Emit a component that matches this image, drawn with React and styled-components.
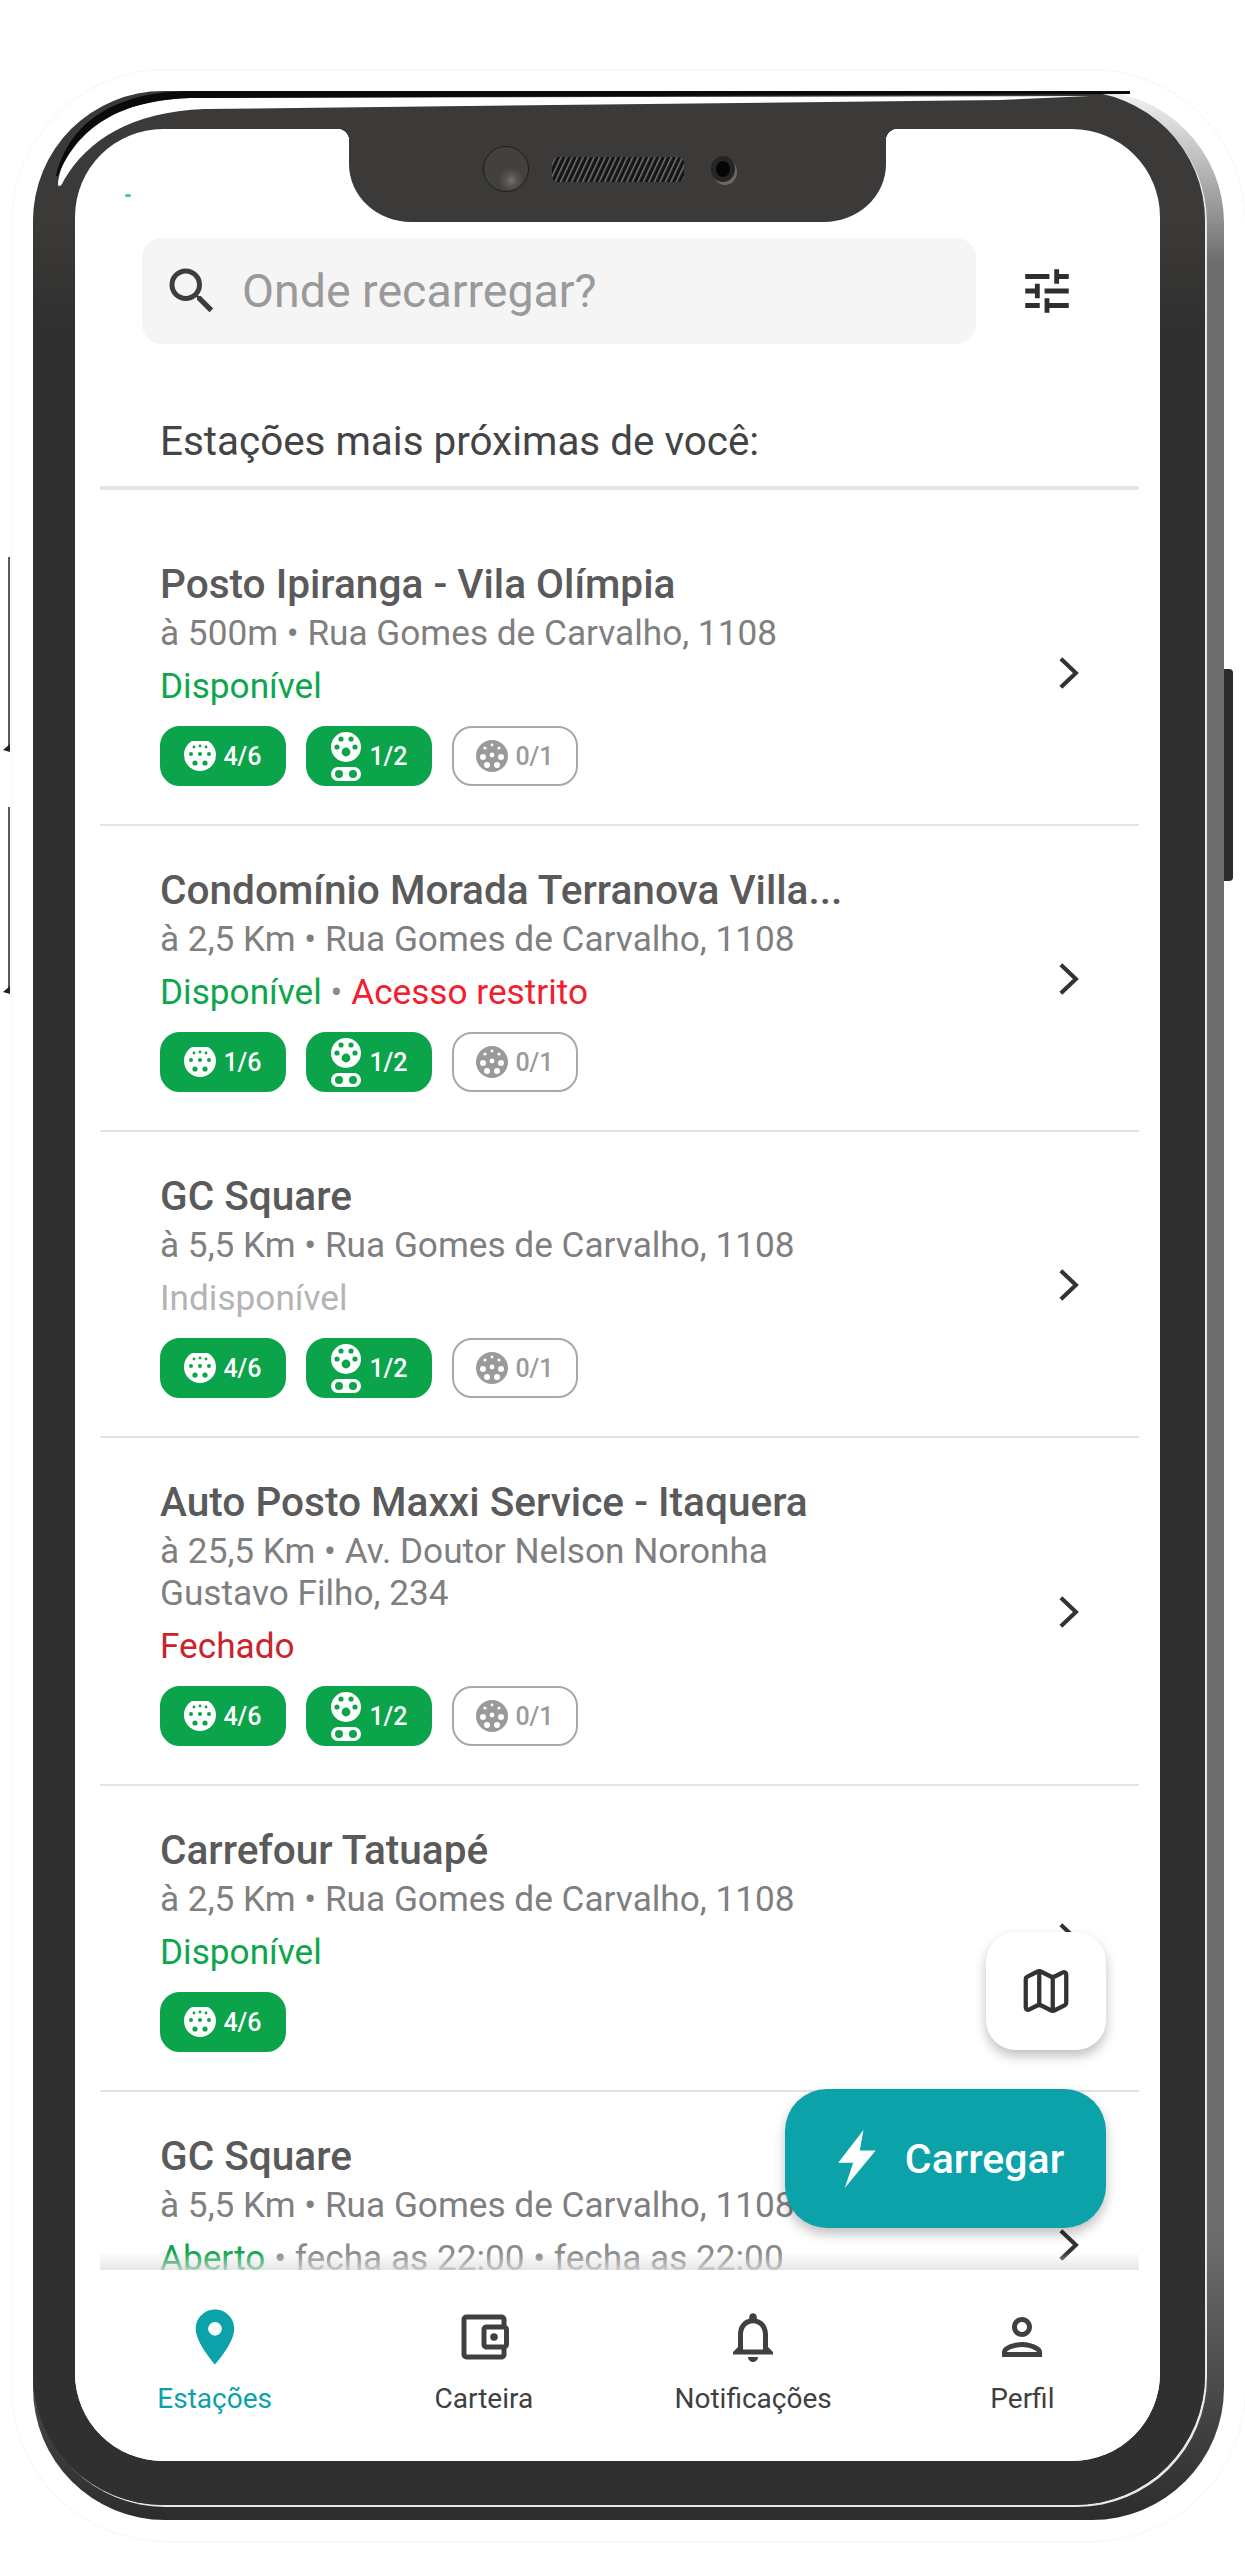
import React from "react"
import styled, { createGlobalStyle } from "styled-components";
import { MdSearch, MdTune, MdOutlineAccountBalanceWallet, MdOutlineNotifications, MdOutlinePerson, MdLocationOn } from "react-icons/md";
import { Map as MapIcon } from "lucide-react";

const GlobalStyle = createGlobalStyle`
  html, body {
    margin: 0;
    padding: 0;
    background: #fff;
    font-family: Roboto, "Liberation Sans", sans-serif;
  }
  * { box-sizing: border-box; }
`;

const Page = styled.div`
  width: 1245px;
  height: 2560px;
  padding: 91px 0 0 33px;
  overflow: hidden;
  background: #fff;
`;

const Phone = styled.div`
  position: relative;
  width: 1191px;
  height: 2429px;
  padding: 0 19px 15px 0;
  border-radius: 132px;
  background: linear-gradient(180deg, #f4f4f4 0, #6e6e6e 170px, #6e6e6e 88%, #2c2c2c 100%);
  box-shadow: 0 0 0 21px #fff, 0 0 0 22px #f6f6f6;
`;

const Bezel = styled.div`
  height: 100%;
  padding: 38px 45px 44px 42px;
  border-radius: 130px;
  background: linear-gradient(180deg, #3c3a38 0, #3c3a38 130px, #303030 240px);
  box-shadow: 2px 2px 0 #e8e8e8;
`;

const Screen = styled.div`
  position: relative;
  height: 100%;
  display: flex;
  flex-direction: column;
  overflow: hidden;
  border-radius: 88px;
  background: #fff;
`;

const Gloss = styled.svg`
  position: absolute;
  left: -33px;
  top: -91px;
  width: 1245px;
  height: 300px;
  pointer-events: none;
`;

const SideKey = styled.div`
  position: absolute;
  left: -25px;
  top: ${props => props.$top}px;
  width: 2px;
  height: ${props => props.$height}px;
  background: #5a5a5a;
  &::after {
    content: "";
    position: absolute;
    left: -5px;
    bottom: -4px;
    border-top: 6px solid transparent;
    border-right: 7px solid #222;
    border-bottom: 2px solid transparent;
  }
`;

const PowerKey = styled.div`
  position: absolute;
  left: 1191px;
  top: 578px;
  width: 9px;
  height: 212px;
  border-radius: 0 4px 4px 0;
  background: #2b2b2b;
`;

const Notch = styled.div`
  position: absolute;
  z-index: 3;
  top: 0;
  left: 274px;
  width: 537px;
  height: 93px;
  display: flex;
  align-items: flex-start;
  padding: 17px 0 0 134px;
  border-radius: 0 0 62px 62px / 0 0 58px 58px;
  background: #3c3a38;
  &::before, &::after {
    content: "";
    position: absolute;
    top: 0;
    width: 12px;
    height: 12px;
  }
  &::before {
    left: -12px;
    background: radial-gradient(circle at 0 100%, transparent 12px, #3c3a38 12.5px);
  }
  &::after {
    right: -12px;
    background: radial-gradient(circle at 100% 100%, transparent 12px, #3c3a38 12.5px);
  }
`;

const Camera = styled.div`
  width: 46px;
  height: 46px;
  border: 1px solid #1f1e1d;
  border-radius: 50%;
  background: radial-gradient(circle at 62% 76%, #77736f 0, #55524f 14%, #43413f 30%);
`;

const Speaker = styled.div`
  width: 132px;
  height: 25px;
  margin: 11px 0 0 23px;
  border-radius: 6px;
  background: repeating-linear-gradient(115deg, #151515 0, #151515 2px, #77736f 3px, #151515 5px);
`;

const Sensor = styled.div`
  width: 24px;
  height: 26px;
  margin: 10px 0 0 27px;
  border: 5px solid #262524;
  border-radius: 50%;
  background: #050505;
  box-shadow: 2px 3px 0 #6a6764;
`;

const StrayMark = styled.span`
  position: absolute;
  left: 50px;
  top: 65px;
  width: 6px;
  height: 3px;
  border-radius: 2px;
  background: #55c0c6;
`;

const Header = styled.div`
  flex: none;
  padding-top: 109px;
`;

const SearchRow = styled.div`
  display: flex;
  align-items: center;
  padding-left: 67px;
`;

const SearchBox = styled.div`
  width: 834px;
  height: 106px;
  display: flex;
  align-items: center;
  gap: 20px;
  padding-left: 20px;
  border-radius: 20px;
  background: #f5f5f5;
  color: #3d3d3d;
  svg { flex: none; }
`;

const Placeholder = styled.span`
  font-size: 46.5px;
  color: #9a9a9a;
`;

const FilterButton = styled.div`
  display: flex;
  margin-left: 42px;
  color: #2e2e2e;
`;

const Heading = styled.h2`
  margin: 74px 0 0;
  padding-left: 85px;
  font-size: 40.4px;
  line-height: 48px;
  font-weight: 400;
  color: #444;
`;

const List = styled.div`
  position: relative;
  flex: 1;
  min-height: 0;
  margin: 20px 21px 0 25px;
  padding-top: 30px;
  overflow: hidden;
  border-top: 4px solid #e6e6e6;
  &::after {
    content: "";
    position: absolute;
    left: 0;
    right: 0;
    bottom: 0;
    height: 18px;
    background: linear-gradient(180deg, rgba(225, 225, 225, 0), rgba(222, 222, 222, 0.75));
  }
`;

const Row = styled.div`
  display: flex;
  align-items: center;
  justify-content: space-between;
  padding: 40px 52px 38px 60px;
  border-bottom: 2px solid #e4e4e4;
`;

const RowText = styled.div`
  min-width: 0;
  width: 680px;
`;

const Title = styled.div`
  font-size: 40.6px;
  line-height: 48px;
  font-weight: 500;
  color: #5a5a5a;
  white-space: nowrap;
`;

const Address = styled.div`
  margin: 4px 0;
  font-size: 35.2px;
  line-height: 42px;
  color: #7f7f7f;
`;

const StatusLine = styled.div`
  margin-top: 8px;
  font-size: 35.2px;
  line-height: 48px;
  color: #8a8a8a;
  white-space: nowrap;
`;

const statusColors = {
  ok: "#0da64c",
  restricted: "#f0202e",
  off: "#b4b4b4",
  closed: "#c9242c",
};

const Status = styled.span`
  color: ${props => statusColors[props.$kind]};
`;

const Chips = styled.div`
  display: flex;
  gap: 20px;
  min-height: 60px;
  margin-top: 16px;
`;

const Chip = styled.div`
  width: 126px;
  height: 60px;
  display: flex;
  align-items: center;
  justify-content: center;
  gap: 7px;
  border-radius: 20px;
  border: 2px solid ${props => (props.$off ? "#a8a8a8" : "#0ba44a")};
  background: ${props => (props.$off ? "#fff" : "#0ba44a")};
  color: ${props => (props.$off ? "#9a9a9a" : "#fff")};
  font-size: 25px;
  font-weight: 500;
`;

const Chevron = styled.svg`
  flex: none;
  width: 38px;
  height: 38px;
  color: #333;
`;

const FloatingMap = styled.div`
  position: absolute;
  z-index: 2;
  right: 54px;
  bottom: 411px;
  width: 120px;
  height: 118px;
  display: flex;
  align-items: center;
  justify-content: center;
  border-radius: 30px;
  background: #fff;
  color: #333;
  box-shadow: 0 6px 12px rgba(0, 0, 0, 0.25);
`;

const ChargeButton = styled.div`
  position: absolute;
  z-index: 2;
  right: 54px;
  bottom: 233px;
  width: 321px;
  height: 139px;
  display: flex;
  align-items: center;
  justify-content: center;
  gap: 26px;
  padding-left: 6px;
  border-radius: 42px;
  background: #0ba2aa;
  color: #fff;
  font-size: 41px;
  font-weight: 500;
  box-shadow: 0 6px 12px rgba(0, 0, 0, 0.25);
`;

const BottomNav = styled.nav`
  flex: none;
  height: 191px;
  display: grid;
  grid-template-columns: repeat(4, 269.25px);
  padding: 37px 0 0 5px;
  background: #fff;
`;

const NavItem = styled.div`
  display: flex;
  flex-direction: column;
  align-items: center;
  gap: 14px;
  color: ${props => (props.$active ? "#0ba2aa" : "#404040")};
  font-size: 28px;
  line-height: 36px;
`;

const NavIcon = styled.div`
  height: 60px;
  display: flex;
  align-items: center;
  justify-content: center;
`;

const ChevronRight = () => (
  <Chevron viewBox="0 0 24 24" fill="none" stroke="currentColor" strokeWidth="2.6">
    <path d="M7.5 3 L17 12 L7.5 21" />
  </Chevron>
);

const hole = (cx, cy, r) =>
  `M${cx - r} ${cy}a${r} ${r} 0 1 0 ${2 * r} 0a${r} ${r} 0 1 0 ${-2 * r} 0Z`;

const TypeTwoIcon = () => (
  <svg width="32" height="32" viewBox="0 0 32 32" fill="currentColor" fillRule="evenodd">
    <path
      d={
        "M8 1H24C29 4 32 9 32 15A16 16 0 0 1 0 15C0 9 3 4 8 1Z" +
        hole(10, 7, 1.4) + hole(16, 6, 1.4) + hole(22, 7, 1.4) +
        hole(7, 14, 2) + hole(16, 14, 2) + hole(25, 14, 2) +
        hole(11, 23, 2.6) + hole(21, 23, 2.6)
      }
    />
  </svg>
);

const ComboIcon = () => (
  <svg width="32" height="50" viewBox="0 0 32 50" fill="currentColor" fillRule="evenodd">
    <path
      d={
        "M1 16A15 15 0 0 1 31 16A15 15 0 0 1 1 16Z" +
        hole(11, 8, 2.6) + hole(21, 8, 2.6) +
        hole(7, 16, 2.6) + hole(25, 16, 2.6) +
        hole(16, 21, 4.4)
      }
    />
    <path d={"M8 36H24A7 7 0 0 1 24 50H8A7 7 0 0 1 8 36Z" + hole(9, 43, 4) + hole(23, 43, 4)} />
  </svg>
);

const ChademoIcon = () => (
  <svg width="32" height="32" viewBox="0 0 32 32" fill="currentColor" fillRule="evenodd">
    <path
      d={
        "M0 16A16 16 0 0 1 32 16A16 16 0 0 1 0 16Z" +
        hole(16, 15, 2.4) + hole(9, 8, 1.6) + hole(16, 5, 1.4) + hole(23, 8, 1.6) +
        hole(7, 17, 3) + hole(25, 17, 3) + hole(11, 25, 3) + hole(21, 25, 3)
      }
    />
  </svg>
);

const BoltIcon = () => (
  <svg width="46" height="60" viewBox="0 0 46 64" fill="currentColor">
    <path d="M31 1 L4 36 L20 36 L11 63 L44 23 L27 23 Z" />
  </svg>
);

const StationRow = ({ station }) => (
  <Row>
    <RowText>
      <Title>{station.name}</Title>
      <Address>{station.address}</Address>
      <StatusLine>{station.status}</StatusLine>
      <Chips>
        {station.chips.map(chip => (
          <Chip key={chip.label} $off={chip.off}>
            {chip.icon}
            {chip.label}
          </Chip>
        ))}
      </Chips>
    </RowText>
    <ChevronRight />
  </Row>
);

const App = () => {
  const allChips = first => [
    { label: first, icon: <TypeTwoIcon /> },
    { label: "1/2", icon: <ComboIcon /> },
    { label: "0/1", icon: <ChademoIcon />, off: true },
  ];

  const stations = [
    {
      name: "Posto Ipiranga - Vila Olímpia",
      address: "à 500m • Rua Gomes de Carvalho, 1108",
      status: <Status $kind="ok">Disponível</Status>,
      chips: allChips("4/6"),
    },
    {
      name: "Condomínio Morada Terranova Villa...",
      address: "à 2,5 Km • Rua Gomes de Carvalho, 1108",
      status: (
        <>
          <Status $kind="ok">Disponível</Status> • <Status $kind="restricted">Acesso restrito</Status>
        </>
      ),
      chips: allChips("1/6"),
    },
    {
      name: "GC Square",
      address: "à 5,5 Km • Rua Gomes de Carvalho, 1108",
      status: <Status $kind="off">Indisponível</Status>,
      chips: allChips("4/6"),
    },
    {
      name: "Auto Posto Maxxi Service - Itaquera",
      address: "à 25,5 Km • Av. Doutor Nelson Noronha Gustavo Filho, 234",
      status: <Status $kind="closed">Fechado</Status>,
      chips: allChips("4/6"),
    },
    {
      name: "Carrefour Tatuapé",
      address: "à 2,5 Km • Rua Gomes de Carvalho, 1108",
      status: <Status $kind="ok">Disponível</Status>,
      chips: [{ label: "4/6", icon: <TypeTwoIcon /> }],
    },
    {
      name: "GC Square",
      address: "à 5,5 Km • Rua Gomes de Carvalho, 1108",
      status: (
        <>
          <Status $kind="ok">Aberto</Status> • fecha as 22:00 • fecha as 22:00
        </>
      ),
      chips: [],
    },
  ];

  return (
    <>
      <GlobalStyle />
      <Page>
        <Phone>
          <SideKey $top={466} $height={191} />
          <SideKey $top={716} $height={183} />
          <PowerKey />
          <Gloss viewBox="0 0 1245 300">
            <path
              d="M58 184 C62 150 92 102 190 98 L1090 96 L1000 100 L205 109 C130 112 88 140 64 180 C62 186 58 188 58 184 Z"
              fill="#fff"
            />
            <path d="M56 176 C66 134 100 92 190 91 L1130 91 L1130 94 L190 98 C110 100 74 136 58 176 Z" fill="#0a0a0a" />
          </Gloss>
          <Bezel>
            <Screen>
              <Notch>
                <Camera />
                <Speaker />
                <Sensor />
              </Notch>
              <StrayMark />
              <Header>
                <SearchRow>
                  <SearchBox>
                    <MdSearch size={60} />
                    <Placeholder>Onde recarregar?</Placeholder>
                  </SearchBox>
                  <FilterButton>
                    <MdTune size={58} />
                  </FilterButton>
                </SearchRow>
                <Heading>Estações mais próximas de você:</Heading>
              </Header>
              <List>
                {stations.map((station, index) => (
                  <StationRow key={index} station={station} />
                ))}
              </List>
              <FloatingMap>
                <MapIcon size={54} strokeWidth={1.9} />
              </FloatingMap>
              <ChargeButton>
                <BoltIcon />
                Carregar
              </ChargeButton>
              <BottomNav>
                <NavItem $active>
                  <NavIcon>
                    <MdLocationOn size={66} />
                  </NavIcon>
                  Estações
                </NavItem>
                <NavItem>
                  <NavIcon>
                    <MdOutlineAccountBalanceWallet size={60} />
                  </NavIcon>
                  Carteira
                </NavItem>
                <NavItem>
                  <NavIcon>
                    <MdOutlineNotifications size={60} />
                  </NavIcon>
                  Notificações
                </NavItem>
                <NavItem>
                  <NavIcon>
                    <MdOutlinePerson size={60} />
                  </NavIcon>
                  Perfil
                </NavItem>
              </BottomNav>
            </Screen>
          </Bezel>
        </Phone>
      </Page>
    </>
  )
}

export default App;
